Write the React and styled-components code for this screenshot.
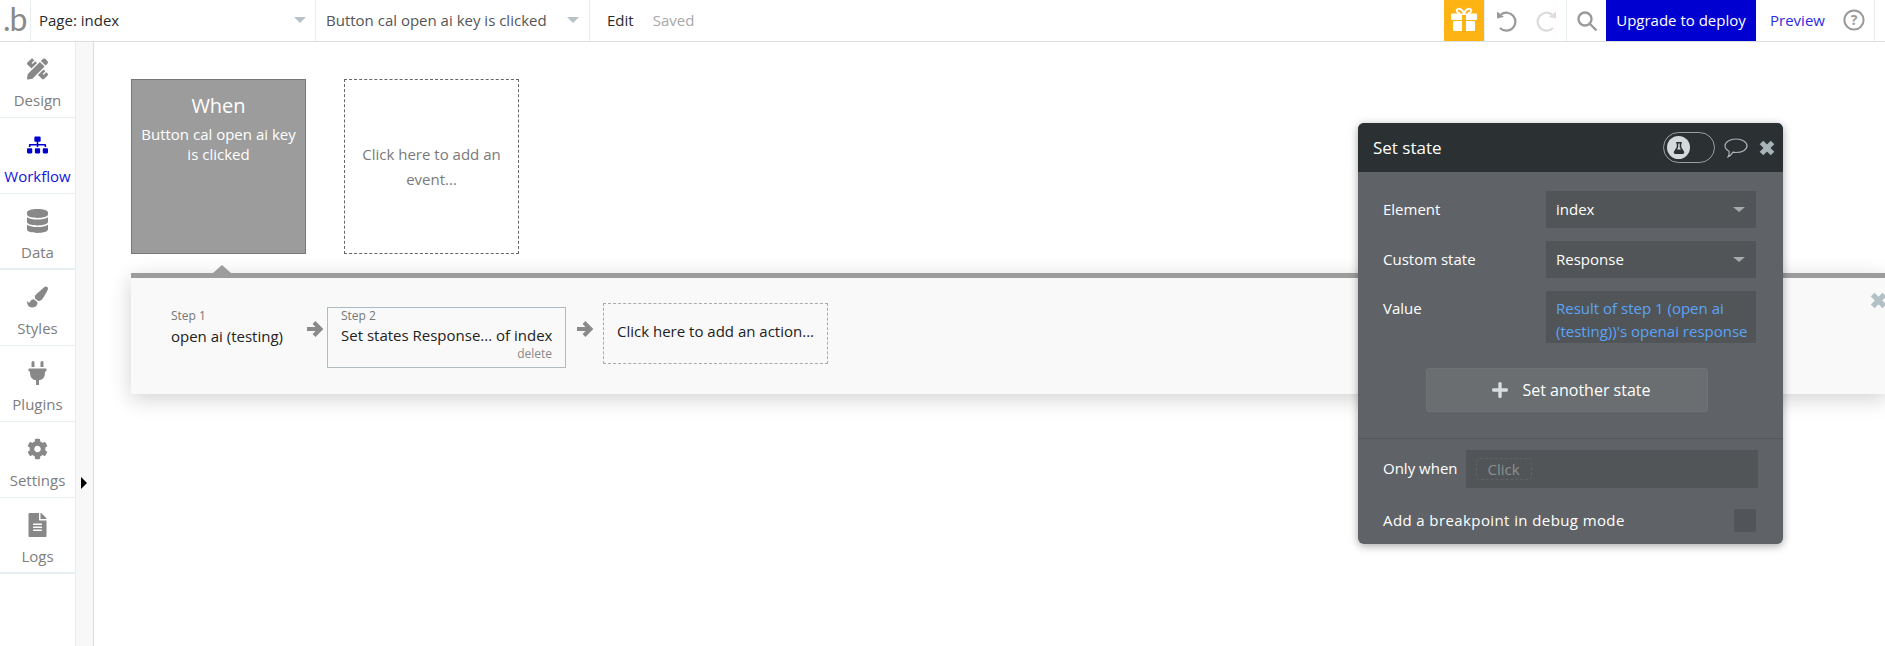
import React from 'react';
import styled, { createGlobalStyle } from 'styled-components';
import { FaPencilRuler, FaSitemap, FaDatabase, FaPaintBrush, FaPlug, FaCog, FaFileAlt, FaFlask, FaPlus } from 'react-icons/fa';

const Global = createGlobalStyle`
  html, body { margin: 0; padding: 0; background: #fff; }
  body { font-family: "Open Sans", "Liberation Sans", sans-serif; }
  * { box-sizing: border-box; }
`;

const Page = styled.div`
  position: relative; width: 1885px; height: 646px; overflow: hidden;
  display: flex; flex-direction: column; background: #fff;
`;
const TopBar = styled.header`
  height: 42px; flex: none; display: flex; align-items: stretch; padding-right: 10px;
  border-bottom: 1px solid #dcdfe0; font-size: 15px; color: #2b2b2b;
`;
const Logo = styled.div`
  width: 31px; border-right: 1px solid #e8eef0; font-family: Lato, "Open Sans", sans-serif;
  font-size: 32px; line-height: 38px; color: #8a8a8a; letter-spacing: -1px; padding-left: 3px; white-space: nowrap;
`;
const Select = styled.div`
  width: ${p => p.$w}px; display: flex; align-items: center; justify-content: space-between;
  padding: 0 ${p => p.$pr}px ${p => p.$pb || 2}px ${p => p.$pl}px; border-right: 1px solid #e8eef0;
  color: ${p => p.$c || '#2b2b2b'};
`;
const Caret = styled.span`
  width: 0; height: 0; border-left: ${p => p.$s}px solid transparent; border-right: ${p => p.$s}px solid transparent;
  border-top: ${p => p.$h || p.$s}px solid ${p => p.$c}; display: block;
`;
const BarText = styled.span`
  align-self: center; margin: 0 0 2px ${p => p.$ml}px; color: ${p => p.$c};
`;
const Spacer = styled.div` flex: 1; `;
const GiftCell = styled.div`
  width: 40px; background: #fdb314; display: flex; align-items: center; justify-content: center; padding-bottom: 3px;
`;
const IconCell = styled.div`
  width: ${p => p.$w}px; display: flex; align-items: center; justify-content: ${p => p.$j || 'center'};
  gap: ${p => p.$gap || 0}px; border-left: ${p => p.$bl ? '1px solid #e8eef0' : 'none'}; color: #999;
  padding-left: ${p => p.$pl || 0}px;
`;
const Upgrade = styled.div`
  width: 150px; background: #0000d0; color: #fff; display: flex; align-items: center; justify-content: center; padding-bottom: 2px;
`;
const Preview = styled.div`
  width: 77px; color: #2d2de0; display: flex; align-items: center; justify-content: center; padding: 0 0 2px 6px;
`;
const HelpCell = styled.div`
  width: 42px; display: flex; align-items: center; justify-content: center; border-right: 1px solid #e8eef0; padding-bottom: 2px;
`;
const Main = styled.div` flex: 1; display: flex; min-height: 0; `;
const Sidebar = styled.nav` width: 75px; flex: none; display: flex; flex-direction: column; `;
const NavItem = styled.div`
  height: 76px; display: flex; flex-direction: column; align-items: center; padding-top: 15px;
  border-bottom: ${p => p.$b || 1}px solid #e8eff2; color: ${p => p.$active ? '#1414dc' : '#7d7d7d'};
  font-size: 15px; line-height: 20px; white-space: nowrap;
  svg { font-size: 21px; height: 24px; color: ${p => p.$active ? '#0000d0' : '#888'}; margin-bottom: 9px; }
`;
const Strip = styled.div`
  width: 19px; flex: none; background: #f8f8f8; border-right: 1px solid #dedede; border-left: 1px solid #ececec; padding: 435px 0 0 5px;
`;
const Expand = styled.div`
  width: 0; height: 0; border-top: 6px solid transparent; border-bottom: 6px solid transparent; border-left: 6px solid #000;
`;
const Canvas = styled.main` flex: 1; min-width: 0; display: flex; flex-direction: column; padding: 37px 0 0 37px; `;
const Events = styled.div` display: flex; gap: 38px; `;
const WhenCard = styled.div`
  width: 175px; height: 175px; background: #9c9c9c; border: 1px solid #777; color: #fff; text-align: center; padding: 11px 8px 0;
`;
const WhenTitle = styled.div` font-size: 20px; line-height: 30px; margin-bottom: 3px; `;
const WhenText = styled.div` font-size: 15px; line-height: 20px; `;
const AddEvent = styled.div`
  width: 175px; height: 175px; border: 1px dashed #666; color: #7a7a7a; font-size: 15px; line-height: 25px;
  text-align: center; display: flex; align-items: center; justify-content: center; padding: 0 12px 0;
`;
const Panel = styled.section`
  position: relative; height: 121px; margin: 19px -2px 0 0; background: #f9f9f9; border-top: 5px solid #9c9c9c;
  box-shadow: 0 5px 20px rgba(0,0,0,.18); display: flex; align-items: flex-start; padding: 25px 0 0 40px;
`;
const Notch = styled.div`
  position: absolute; left: 82px; top: -13px; width: 0; height: 0;
  border-left: 9px solid transparent; border-right: 9px solid transparent; border-bottom: 8px solid #9c9c9c;
`;
const Step = styled.div` width: 135px; padding-top: 3px; `;
const StepLabel = styled.div` font-size: 12px; line-height: 20px; color: #777; `;
const StepName = styled.div` font-size: 15px; line-height: 20px; color: #222; white-space: nowrap; `;
const Arrow = styled.div`
  width: ${p => p.$w || 22}px; margin-top: 14px; line-height: 0; height: 24px; display: flex; align-items: center;
  margin-left: ${p => p.$ml || 0}px; margin-right: ${p => p.$mr || 0}px;
`;
const StepBox = styled.div`
  width: 239px; height: 61px; border: 1px solid #aebbc0; padding: 0 13px; margin-top: 4px; background: #f9f9f9;
`;
const StepBoxLabel = styled(StepLabel)` line-height: 16px; `;
const StepBoxName = styled(StepName)` margin-top: 1px; `;
const Delete = styled.div` text-align: right; font-size: 12px; line-height: 16px; color: #888; margin-top: 1px; `;
const AddAction = styled.div`
  width: 225px; height: 61px; border: 1px dashed #aaa; color: #222; font-size: 15px; display: flex; align-items: center;
  padding: 0 13px 6px; white-space: nowrap;
`;
const PanelClose = styled.div` position: absolute; right: 0; top: 14px; width: 17px; line-height: 0; `;
const Popup = styled.aside`
  position: absolute; left: 1358px; top: 123px; width: 425px; height: 421px; background: #5f6367; border-radius: 6px;
  box-shadow: 0 2px 8px rgba(0,0,0,.35); color: #fff; font-size: 15px; display: flex; flex-direction: column;
`;
const PopHead = styled.div`
  height: 49px; background: #2b3133; border-radius: 6px 6px 0 0; display: flex; align-items: center; padding: 0 8px 0 15px; flex: none;
`;
const PopTitle = styled.div` flex: 1; font-size: 17px; `;
const Toggle = styled.div`
  width: 52px; height: 31px; border: 1px solid #9aa0a3; border-radius: 16px; padding: 3px; margin-right: 9px;
`;
const Knob = styled.div`
  width: 23px; height: 23px; border-radius: 50%; background: #d5d9dc; color: #2b3133; display: flex; align-items: center; justify-content: center; font-size: 12px;
`;
const CloseIcon = styled.div` margin-left: 11px; line-height: 0; `;
const PopBody = styled.div` padding: 19px 27px 0 25px; display: flex; flex-direction: column; gap: 13px; `;
const Row = styled.div` display: flex; align-items: ${p => p.$top ? 'flex-start' : 'center'}; justify-content: space-between; `;
const Label = styled.div` padding-bottom: 2px; padding-top: ${p => p.$pt || 0}px; color: #fff; white-space: nowrap; letter-spacing: ${p => p.$ls || 0}px; `;
const Field = styled.div`
  width: 210px; height: 37px; background: #515557; display: flex; align-items: center; justify-content: space-between; padding: 0 11px 1px 10px;
`;
const ValueField = styled.div`
  width: 210px; height: 52px; background: #515557; color: #5ba4f8; line-height: 23px; padding: 6px 0 0 10px; overflow: hidden; white-space: pre;
`;
const AddState = styled.div`
  width: 282px; height: 44px; margin: 25px 0 0 68px; background: #6a6e71; border: 1px solid #6f7376; border-radius: 3px;
  display: flex; align-items: center; justify-content: center; gap: 13px; font-size: 16px; padding-left: 8px; flex: none;
  svg { font-size: 18px; color: #d8dde0; }
`;
const Divider = styled.div` height: 1px; background: #54585b; margin-top: 26px; flex: none; `;
const WhenRow = styled.div` display: flex; align-items: center; padding: 11px 25px 0 25px; gap: 8px; `;
const WhenField = styled.div` flex: 1; height: 38px; background: #515557; display: flex; align-items: center; padding-left: 10px; `;
const ClickChip = styled.div`
  height: 22px; width: 56px; padding: 0 0 0 11px; border: 1px dashed #5f6366; border-radius: 4px; color: #8d9092; display: flex; align-items: center;
`;
const BreakRow = styled.div` display: flex; align-items: center; justify-content: space-between; padding: 21px 27px 0 25px; `;
const Check = styled.div` width: 22px; height: 23px; background: #515557; border-radius: 2px; `;

const ArrowIcon = () => (
  <svg width="18" height="18" viewBox="0 0 18 18" fill="none" stroke="#8a8a8a" strokeWidth="4" strokeLinejoin="miter">
    <path d="M1 9h12" /><path d="M8 2.500l6.500 6.500L8 15.500" />
  </svg>
);
const CrossIcon = ({ c, s }) => (
  <svg width={s} height={s} viewBox="0 0 16 16" stroke={c} strokeWidth="5" fill="none"><path d="M2.500 2.500l11 11M13.500 2.500l-11 11" /></svg>
);
const GiftIcon = () => (
  <svg width="26" height="24" viewBox="0 0 26 24">
    <path d="M13 6.500C11 2 8 1 6.500 2.200 5 3.500 6 6 9 6.500M13 6.500C15 2 18 1 19.500 2.200 21 3.500 20 6 17 6.500" fill="none" stroke="#fff" strokeWidth="2" />
    <rect x="0" y="6.500" width="26" height="6.500" rx="1" fill="#fff" />
    <rect x="2" y="14" width="22" height="10" rx="1" fill="#fff" />
    <rect x="11" y="8" width="4" height="16" fill="#fdb314" />
  </svg>
);
const UndoIcon = ({ c, flip }) => (
  <svg width="24" height="24" viewBox="0 0 24 24" fill="none" style={flip ? { transform: 'scaleX(-1)' } : undefined}>
    <path d="M7 5.500A9 9 0 1 1 6 19" stroke={c} strokeWidth="2.200" />
    <path d="M3 2.500v7l7-1.500z" fill={c} />
  </svg>
);

const nav = [
  ['Design', FaPencilRuler], ['Workflow', FaSitemap, true], ['Data', FaDatabase], ['Styles', FaPaintBrush],
  ['Plugins', FaPlug], ['Settings', FaCog], ['Logs', FaFileAlt],
];

export default function App() {
  return (
    <Page>
      <Global />
      <TopBar>
        <Logo>.b</Logo>
        <Select $w={285} $pl={8} $pr={9}>Page: index<Caret $s={6} $h={6} $c="#b6c2c8" /></Select>
        <Select $w={274} $pl={10} $pr={10} $pb={1} $c="#555">Button cal open ai key is clicked<Caret $s={6} $h={6} $c="#b6c2c8" /></Select>
        <BarText $ml={17} $c="#2b2b2b">Edit</BarText>
        <BarText $ml={19} $c="#a9a9a9">Saved</BarText>
        <Spacer />
        <GiftCell><GiftIcon /></GiftCell>
        <IconCell $w={82} $j="flex-start" $pl={9} $gap={17} $bl>
          <UndoIcon c="#9a9a9a" />
          <UndoIcon c="#dcdcdc" flip />
        </IconCell>
        <IconCell $w={40} $bl>
          <svg width="22" height="22" viewBox="0 0 22 22" fill="none" stroke="#9a9a9a" strokeWidth="2.400"><circle cx="9" cy="9" r="6.500" /><path d="M14 14l6.500 6.500" /></svg>
        </IconCell>
        <Upgrade>Upgrade to deploy</Upgrade>
        <Preview>Preview</Preview>
        <HelpCell>
          <svg width="22" height="22" viewBox="0 0 22 22"><circle cx="11" cy="11" r="9.600" fill="none" stroke="#9a9a9a" strokeWidth="2" /><text x="11" y="16" textAnchor="middle" fontSize="14" fontWeight="700" fill="#9a9a9a" fontFamily="Open Sans">?</text></svg>
        </HelpCell>
      </TopBar>
      <Main>
        <Sidebar>
          {nav.map(([t, I, a]) => (
            <NavItem key={t} $active={a} $b={t === 'Data' || t === 'Logs' ? 2 : 1}><I />{t}</NavItem>
          ))}
        </Sidebar>
        <Strip><Expand /></Strip>
        <Canvas>
          <Events>
            <WhenCard>
              <WhenTitle>When</WhenTitle>
              <WhenText>Button cal open ai key is clicked</WhenText>
            </WhenCard>
            <AddEvent>Click here to add an event...</AddEvent>
          </Events>
          <Panel>
            <Notch />
            <Step>
              <StepLabel>Step 1</StepLabel>
              <StepName>open ai (testing)</StepName>
            </Step>
            <Arrow $w={21}><ArrowIcon /></Arrow>
            <StepBox>
              <StepBoxLabel>Step 2</StepBoxLabel>
              <StepBoxName>Set states Response... of index</StepBoxName>
              <Delete>delete</Delete>
            </StepBox>
            <Arrow $ml={10} $mr={5}><ArrowIcon /></Arrow>
            <AddAction>Click here to add an action...</AddAction>
            <PanelClose><CrossIcon c="#b3c0c6" s={17} /></PanelClose>
          </Panel>
        </Canvas>
      </Main>
      <Popup>
        <PopHead>
          <PopTitle>Set state</PopTitle>
          <Toggle><Knob><FaFlask /></Knob></Toggle>
          <svg width="24" height="20" viewBox="0 0 24 20" fill="none" stroke="#a9b4b9" strokeWidth="1.200"><path d="M12 1c6 0 11 2.800 11 6.800S18 14.500 12 14.500c-1 0-2-.1-3-.3C7.500 16.500 5.500 18.500 4 19c.8-1.500 1.500-4 1-5.800C2.800 12 1 10 1 7.800 1 3.800 6 1 12 1z" /></svg>
          <CloseIcon><CrossIcon c="#a9b4b9" s={16} /></CloseIcon>
        </PopHead>
        <PopBody>
          <Row><Label>Element</Label><Field>index<Caret $s={6} $h={5} $c="#a9a9a9" /></Field></Row>
          <Row><Label>Custom state</Label><Field>Response<Caret $s={6} $h={5} $c="#a9a9a9" /></Field></Row>
          <Row $top><Label $pt={7}>Value</Label><ValueField>{"Result of step 1 (open ai\n(testing))'s openai response"}</ValueField></Row>
        </PopBody>
        <AddState><FaPlus />Set another state</AddState>
        <Divider />
        <WhenRow><Label>Only when</Label><WhenField><ClickChip>Click</ClickChip></WhenField></WhenRow>
        <BreakRow><Label $ls={0.4}>Add a breakpoint in debug mode</Label><Check /></BreakRow>
      </Popup>
    </Page>
  );
}
